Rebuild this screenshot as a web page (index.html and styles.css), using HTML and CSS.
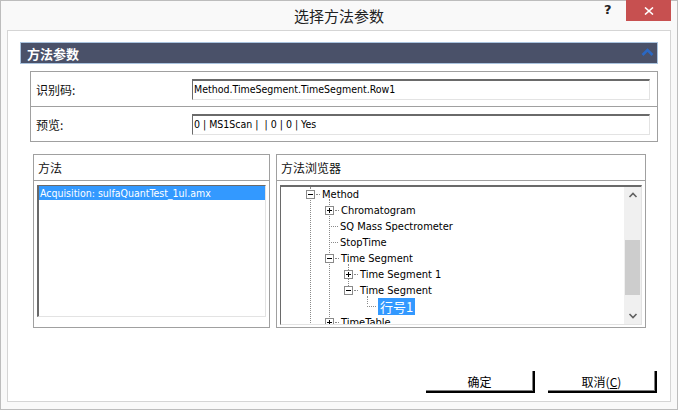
FILE: index.html
```html
<!DOCTYPE html>
<html lang="zh-CN">
<head>
    <meta charset="UTF-8">
    <title>选择方法参数</title>
    <link rel="stylesheet" href="styles.css">
</head>
<body>
    <div class="window">
        <div class="titlebar">
            <span class="title">选择方法参数</span>
            <span class="help">?</span>
            <div class="close">
                <svg width="10" height="8" viewBox="0 0 10 8"><path d="M1 0.5 L9 7.5 M9 0.5 L1 7.5" stroke="#fff" stroke-width="1.6"/></svg>
            </div>
        </div>

        <div class="client">
            <div class="section-head">
                <span>方法参数</span>
                <svg class="chevron" width="13" height="8" viewBox="0 0 13 8"><path d="M1.5 7 L6.5 2 L11.5 7" fill="none" stroke="#2a68c4" stroke-width="2.6"/></svg>
            </div>

            <div class="params">
                <div class="param-row">
                    <div class="param-label">识别码:</div>
                    <div class="field">Method.TimeSegment.TimeSegment.Row1</div>
                </div>
                <div class="param-row">
                    <div class="param-label">预览:</div>
                    <div class="field">0 | MS1Scan |&nbsp; | 0 | 0 | Yes</div>
                </div>
            </div>

            <div class="panels">
                <div class="panel method-panel">
                    <div class="panel-title">方法</div>
                    <div class="panel-body">
                        <div class="listbox">
                            <div class="list-item selected">Acquisition: sulfaQuantTest_1ul.amx</div>
                        </div>
                    </div>
                </div>

                <div class="panel browser-panel">
                    <div class="panel-title">方法浏览器</div>
                    <div class="panel-body">
                        <div class="treebox">
                            <div class="tree">
                                <!-- dotted guide lines -->
                                <div class="vline" style="left: 29px; top: 0; height: 140px;"></div>
                                <div class="vline" style="left: 48px; top: 12px; height: 124px;"></div>
                                <div class="vline" style="left: 67px; top: 77px; height: 22px;"></div>
                                <div class="vline" style="left: 86px; top: 109px; height: 8px;"></div>

                                <div class="node" style="left: 25px; top: 0;"><span class="box minus"></span><span class="dots"></span><span class="label">Method</span></div>
                                <div class="node" style="left: 44px; top: 16px;"><span class="box plus"></span><span class="dots"></span><span class="label">Chromatogram</span></div>
                                <div class="node leaf" style="left: 48px; top: 32px;"><span class="dots long"></span><span class="label">SQ Mass Spectrometer</span></div>
                                <div class="node leaf" style="left: 48px; top: 48px;"><span class="dots long"></span><span class="label">StopTime</span></div>
                                <div class="node" style="left: 44px; top: 64px;"><span class="box minus"></span><span class="dots"></span><span class="label">Time Segment</span></div>
                                <div class="node" style="left: 63px; top: 80px;"><span class="box plus"></span><span class="dots"></span><span class="label">Time Segment 1</span></div>
                                <div class="node" style="left: 63px; top: 96px;"><span class="box minus"></span><span class="dots"></span><span class="label">Time Segment</span></div>
                                <div class="node leaf" style="left: 86px; top: 112px;"><span class="dots long"></span><span class="label picked">行号1</span></div>
                                <div class="node" style="left: 44px; top: 128px;"><span class="box plus"></span><span class="dots"></span><span class="label">TimeTable</span></div>
                            </div>
                            <div class="scrollbar">
                                <svg class="arrow" width="16" height="16" viewBox="0 0 16 16"><path d="M4.5 10 L8 6.5 L11.5 10" fill="none" stroke="#606060" stroke-width="1.6"/></svg>
                                <div class="track"><div class="thumb"></div></div>
                                <svg class="arrow" width="16" height="16" viewBox="0 0 16 16"><path d="M4.5 6 L8 9.5 L11.5 6" fill="none" stroke="#606060" stroke-width="1.6"/></svg>
                            </div>
                        </div>
                    </div>
                </div>
            </div>

            <div class="buttons">
                <div class="btn">确定</div>
                <div class="btn">取消(<u>C</u>)</div>
            </div>
        </div>
    </div>
</body>
</html>
```

FILE: styles.css
```css
body {
    margin: 0;
    background: #ffffff;
    font-family: "Liberation Sans", "Noto Sans CJK SC", sans-serif;
}

.window {
    width: 678px;
    height: 410px;
    box-sizing: border-box;
    border: 1px solid #bdbdbd;
    background: #f9f9f9;
    display: flex;
    flex-direction: column;
}

.titlebar {
    height: 29px;
    position: relative;
    display: flex;
    justify-content: center;
    align-items: center;
}

.title {
    font-family: "Noto Sans CJK SC", sans-serif;
    font-size: 15px;
    color: #222;
    margin-top: -1px;
}

.help {
    position: absolute;
    left: 603px;
    top: 1px;
    font-family: "DejaVu Sans", sans-serif;
    font-weight: bold;
    font-size: 13px;
    color: #222;
}

.close {
    position: absolute;
    left: 625px;
    top: -1px;
    width: 45px;
    height: 21px;
    background: #c75050;
    display: flex;
    justify-content: center;
    align-items: center;
}

.client {
    margin: 0 6px 7px 6px;
    flex: 1;
    border: 1px solid #d5d5d5;
    background: #ffffff;
    display: flex;
    flex-direction: column;
    padding: 11px 12px 0 12px;
}

.section-head {
    height: 20px;
    background: #4a5169;
    border: 1px solid #a9c3df;
    display: flex;
    align-items: center;
    justify-content: space-between;
    padding: 0 3px 0 6px;
    color: #fff;
    font-family: "Noto Sans CJK SC", sans-serif;
    font-weight: bold;
    font-size: 13px;
}

.chevron {
    margin-top: -2px;
}

.params {
    margin: 7px 0 0 10px;
    border: 1px solid #a0a0a0;
}

.param-row {
    height: 34px;
    display: flex;
    align-items: center;
}

.param-row + .param-row {
    border-top: 1px solid #a0a0a0;
}

.param-label {
    width: 156px;
    padding-left: 5px;
    font-family: "Noto Sans CJK SC", sans-serif;
    font-size: 12px;
    color: #111;
}

.field {
    width: 455px;
    height: 18px;
    border-top: 2px solid #6a6a6a;
    border-left: 1px solid #6a6a6a;
    border-right: 1px solid #e3e3e3;
    border-bottom: 1px solid #e3e3e3;
    font-family: "DejaVu Sans Condensed", "Liberation Sans", sans-serif;
    font-size: 10.5px;
    line-height: 17px;
    padding-left: 1px;
    color: #000;
    white-space: nowrap;
}

.panels {
    display: flex;
    margin: 12px 0 0 13px;
    gap: 6px;
}

.panel {
    border: 1px solid #a0a0a0;
    height: 174px;
    box-sizing: border-box;
    display: flex;
    flex-direction: column;
}

.method-panel {
    width: 237px;
}

.browser-panel {
    width: 370px;
}

.panel-title {
    height: 25px;
    border-bottom: 1px solid #a0a0a0;
    display: flex;
    align-items: center;
    padding-left: 4px;
    font-family: "Noto Sans CJK SC", sans-serif;
    font-size: 12px;
    color: #111;
}

.panel-body {
    padding: 4px 3px 0 3px;
}

.listbox {
    height: 132px;
    border-top: 1px solid #6a6a6a;
    border-left: 2px solid #6a6a6a;
    border-right: 1px solid #e3e3e3;
    border-bottom: 1px solid #e3e3e3;
    box-sizing: border-box;
    padding-top: 0;
}

.list-item {
    height: 14px;
    line-height: 14px;
    padding-left: 1px;
    font-family: "DejaVu Sans Condensed", "Liberation Sans", sans-serif;
    font-size: 10.5px;
}

.list-item.selected {
    background: #3399ff;
    color: #fff;
}

.treebox {
    height: 140px;
    border-top: 2px solid #6a6a6a;
    border-left: 1px solid #6a6a6a;
    border-right: 1px solid #e3e3e3;
    border-bottom: 1px solid #e3e3e3;
    box-sizing: border-box;
    display: flex;
}

.tree {
    flex: 1;
    position: relative;
    overflow: hidden;
}

.vline {
    position: absolute;
    width: 0;
    border-left: 1px dotted #8a8a8a;
}

.node {
    position: absolute;
    display: flex;
    align-items: center;
    height: 14px;
    white-space: nowrap;
    font-family: "DejaVu Sans Condensed", "Liberation Sans", sans-serif;
    font-size: 11px;
    color: #000;
}

.box {
    width: 7px;
    height: 7px;
    border: 1px solid #8a8a8a;
    background: #fff;
    position: relative;
}

.box::before {
    content: "";
    position: absolute;
    left: 1px;
    top: 3px;
    width: 5px;
    height: 1px;
    background: #000;
}

.box.plus::after {
    content: "";
    position: absolute;
    left: 3px;
    top: 1px;
    width: 1px;
    height: 5px;
    background: #000;
}

.dots {
    width: 4px;
    border-top: 1px dotted #8a8a8a;
    margin: 0 2px 0 1px;
}

.dots.long {
    width: 9px;
    margin-left: 0;
}

.label.picked {
    background: #3399ff;
    color: #fff;
    padding: 0 2px;
    font-family: "Noto Sans CJK SC", sans-serif;
    font-size: 13px;
    height: 17px;
    line-height: 17px;
}

.scrollbar {
    width: 17px;
    background: #f0f0f0;
    display: flex;
    flex-direction: column;
}

.arrow {
    display: block;
    margin-left: 1px;
}

.track {
    flex: 1;
    padding-top: 37px;
}

.thumb {
    margin-left: 1px;
    width: 15px;
    height: 55px;
    background: #cdcdcd;
}

.buttons {
    display: flex;
    justify-content: flex-end;
    gap: 13px;
    margin-top: auto;
    margin-bottom: 8px;
    padding-right: 1px;
}

.btn {
    width: 107px;
    height: 20px;
    border-right: 2px solid #000;
    border-bottom: 2px solid #000;
    box-shadow: inset -1px -1px 0 #808080;
    display: flex;
    align-items: center;
    justify-content: center;
    font-family: "Noto Sans CJK SC", sans-serif;
    font-size: 12px;
    color: #000;
}
```
